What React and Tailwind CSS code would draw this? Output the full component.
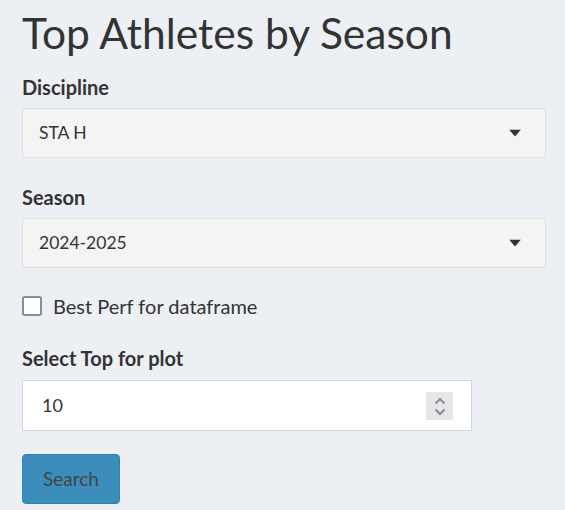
import React, { useState } from "react";

const font = { fontFamily: "Lato, 'Noto Sans', sans-serif" };

function Caret() {
  return (
    <svg width="12" height="7" viewBox="0 0 12 7" className="absolute right-[24px] top-1/2 -translate-y-1/2">
      <path d="M0 0h12L6 7z" fill="#333" />
    </svg>
  );
}

function SelectBox({ value }) {
  return (
    <div className="relative h-[50px] w-[524px] rounded-[4px] border border-[#dcdcdc] bg-[#f4f4f4] pl-[16px] flex items-center text-[17.5px] text-[#333]">
      {value}
      <Caret />
    </div>
  );
}

export default function App() {
  const [best, setBest] = useState(false);
  return (
    <div className="min-h-[510px] bg-[#ecf0f5] px-[22px] pt-[3px] text-[#333]" style={font}>
      <h1 className="text-[42.5px] leading-[60px] font-normal text-[#333]">Top Athletes by Season</h1>

      <label className="block mt-[12px] text-[20px] font-bold leading-[24px]">Discipline</label>
      <div className="mt-[9px]"><SelectBox value="STA H" /></div>

      <label className="block mt-[27px] text-[20px] font-bold leading-[24px]">Season</label>
      <div className="mt-[9px]"><SelectBox value="2024-2025" /></div>

      <label className="mt-[26px] flex items-center gap-[11px] text-[20px] leading-[24px] cursor-pointer">
        <span
          onClick={() => setBest(!best)}
          className="w-[20px] h-[20px] rounded-[3px] border-2 border-[#8a8a93] bg-white"
        />
        Best Perf for dataframe
      </label>

      <label className="block mt-[28px] text-[20px] font-bold leading-[24px]">Select Top for plot</label>
      <div className="mt-[10px] relative h-[51px] w-[450px] border border-[#d2d6de] bg-white pl-[19px] flex items-center text-[18px]">
        10
        <div className="absolute right-[18px] top-[11px] w-[27px] h-[28px] bg-[#e6e6ea] flex flex-col items-center justify-center gap-[3px]">
          <svg width="12" height="8" viewBox="0 0 12 8"><path d="M1.5 6.5L6 2l4.5 4.5" stroke="#8c8c96" strokeWidth="2" fill="none" /></svg>
          <svg width="12" height="8" viewBox="0 0 12 8"><path d="M1.5 1.5L6 6l4.5-4.5" stroke="#8c8c96" strokeWidth="2" fill="none" /></svg>
        </div>
      </div>

      <button className="mt-[23px] h-[50px] w-[98px] rounded-[4px] border border-[#367fa9] bg-[#3c8dbc] text-[19px] text-[#444]">
        Search
      </button>
    </div>
  );
}
